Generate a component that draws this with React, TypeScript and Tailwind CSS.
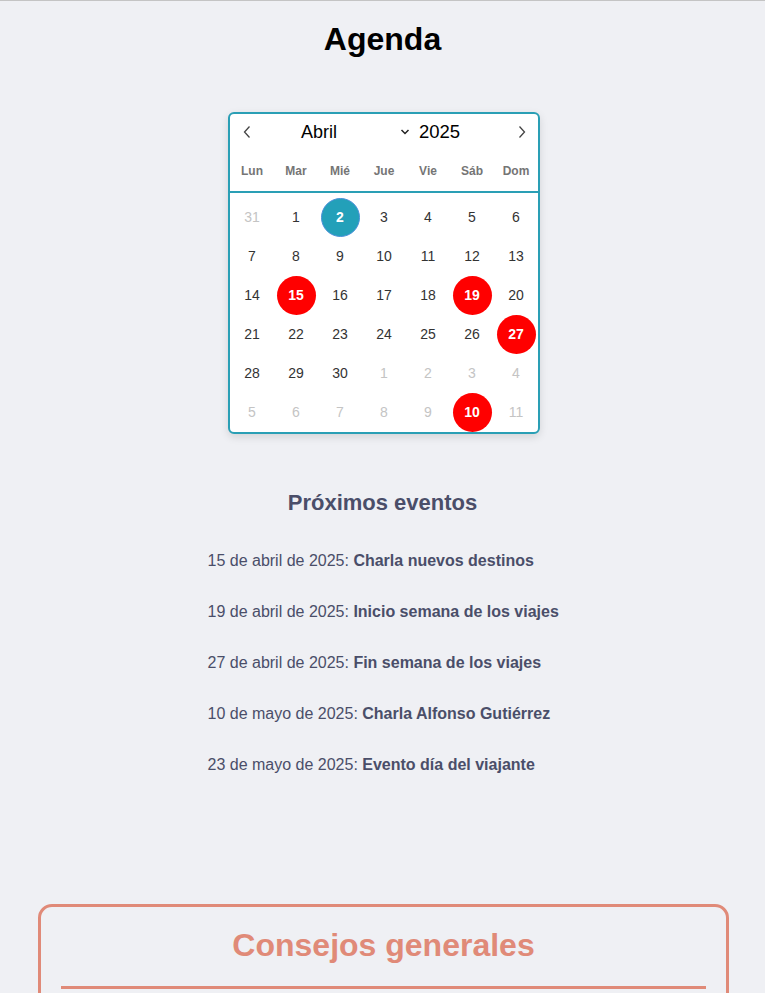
import React from "react";

type Dia = { n: number; fuera?: boolean; hoy?: boolean; evento?: boolean };

const semanas: Dia[][] = [
  [{ n: 31, fuera: true }, { n: 1 }, { n: 2, hoy: true }, { n: 3 }, { n: 4 }, { n: 5 }, { n: 6 }],
  [{ n: 7 }, { n: 8 }, { n: 9 }, { n: 10 }, { n: 11 }, { n: 12 }, { n: 13 }],
  [{ n: 14 }, { n: 15, evento: true }, { n: 16 }, { n: 17 }, { n: 18 }, { n: 19, evento: true }, { n: 20 }],
  [{ n: 21 }, { n: 22 }, { n: 23 }, { n: 24 }, { n: 25 }, { n: 26 }, { n: 27, evento: true }],
  [{ n: 28 }, { n: 29 }, { n: 30 }, { n: 1, fuera: true }, { n: 2, fuera: true }, { n: 3, fuera: true }, { n: 4, fuera: true }],
  [{ n: 5, fuera: true }, { n: 6, fuera: true }, { n: 7, fuera: true }, { n: 8, fuera: true }, { n: 9, fuera: true }, { n: 10, fuera: true, evento: true }, { n: 11, fuera: true }],
];

const diasSemana = ["Lun", "Mar", "Mié", "Jue", "Vie", "Sáb", "Dom"];

const eventos = [
  { fecha: "15 de abril de 2025", titulo: "Charla nuevos destinos" },
  { fecha: "19 de abril de 2025", titulo: "Inicio semana de los viajes" },
  { fecha: "27 de abril de 2025", titulo: "Fin semana de los viajes" },
  { fecha: "10 de mayo de 2025", titulo: "Charla Alfonso Gutiérrez" },
  { fecha: "23 de mayo de 2025", titulo: "Evento día del viajante" },
];

const Calendario: React.FC = () => {
  return (
    <div className="w-[312px] bg-white border-2 border-[#2a9fb5] rounded-[6px] shadow-[0_3px_8px_rgba(0,0,0,0.12)] overflow-hidden">
      {/* Cabecera */}
      <div className="flex items-center h-[36px] pl-[7px]">
        <button className="w-[20px] flex justify-center">
          <svg width="10" height="14" viewBox="0 0 10 14" fill="none">
            <path d="M7.5 1.5 L2.5 7 L7.5 12.5" stroke="#444" strokeWidth="1.3" />
          </svg>
        </button>
        <span className="w-[98px] text-center text-[18px] text-black ml-[13px]">Abril</span>
        <svg width="10" height="8" viewBox="0 0 10 8" fill="none" className="ml-[32px]">
          <path d="M1.5 2 L5 5.5 L8.5 2" stroke="#222" strokeWidth="1.5" />
        </svg>
        <span className="text-[18.5px] text-black ml-[9px]">2025</span>
        <button className="w-[20px] flex justify-center ml-[52px]">
          <svg width="10" height="14" viewBox="0 0 10 14" fill="none">
            <path d="M2.5 1.5 L7.5 7 L2.5 12.5" stroke="#444" strokeWidth="1.3" />
          </svg>
        </button>
      </div>

      {/* Días de la semana */}
      <div className="grid grid-cols-7 h-[43px] items-center border-b-2 border-[#2a9fb5] pt-[1px]">
        {diasSemana.map((d) => (
          <span key={d} className="text-center text-[12px] font-bold text-[#757575]">
            {d}
          </span>
        ))}
      </div>

      {/* Días */}
      <div className="pt-[5px]">
        {semanas.map((semana, i) => (
          <div key={i} className="grid grid-cols-7 h-[39px]">
            {semana.map((dia, j) => {
              let clase = "text-[#333]";
              if (dia.fuera) clase = "text-[#c4c4c4]";
              if (dia.hoy) clase = "bg-[#23a0b9] text-white font-bold border border-[#4a90d9]";
              if (dia.evento) clase = "bg-[#ff0000] text-white font-bold";
              return (
                <div key={j} className="flex items-center justify-center">
                  <span
                    className={`w-[39px] h-[39px] rounded-full flex items-center justify-center text-[14px] ${clase}`}
                  >
                    {dia.n}
                  </span>
                </div>
              );
            })}
          </div>
        ))}
      </div>
    </div>
  );
};

export default function App() {
  return (
    <div className="min-h-[993px] bg-[#eff0f4] border-t border-[#c4c4c4] font-['Liberation_Sans',Arial,sans-serif] overflow-hidden">
      <h1 className="text-center text-[32px] font-bold text-black pt-[18px] leading-[40px]">
        Agenda
      </h1>

      <div className="mt-[53px] flex justify-center pl-[3px]">
        <Calendario />
      </div>

      {/* Próximos eventos */}
      <section className="mt-[54px]">
        <h2 className="text-center text-[22px] font-bold text-[#4a4e69] leading-[30px]">
          Próximos eventos
        </h2>
        <ul className="w-[350px] mx-auto mt-[34px] flex flex-col gap-[33px]">
          {eventos.map((ev) => (
            <li key={ev.fecha} className="text-[16px] text-[#4a4e69] leading-[18px] whitespace-nowrap">
              {ev.fecha}: <strong className="font-bold">{ev.titulo}</strong>
            </li>
          ))}
        </ul>
      </section>

      {/* Consejos generales */}
      <section className="ml-[38px] mr-[36px] mt-[130px] border-[3px] border-[#e08a78] rounded-[14px] px-[20px] pt-[18px] min-h-[200px]">
        <h2 className="text-center text-[32px] font-bold text-[#e08a78] leading-[40px]">
          Consejos generales
        </h2>
        <div className="mt-[21px] h-[3px] bg-[#e08a78]" />
      </section>
    </div>
  );
}
